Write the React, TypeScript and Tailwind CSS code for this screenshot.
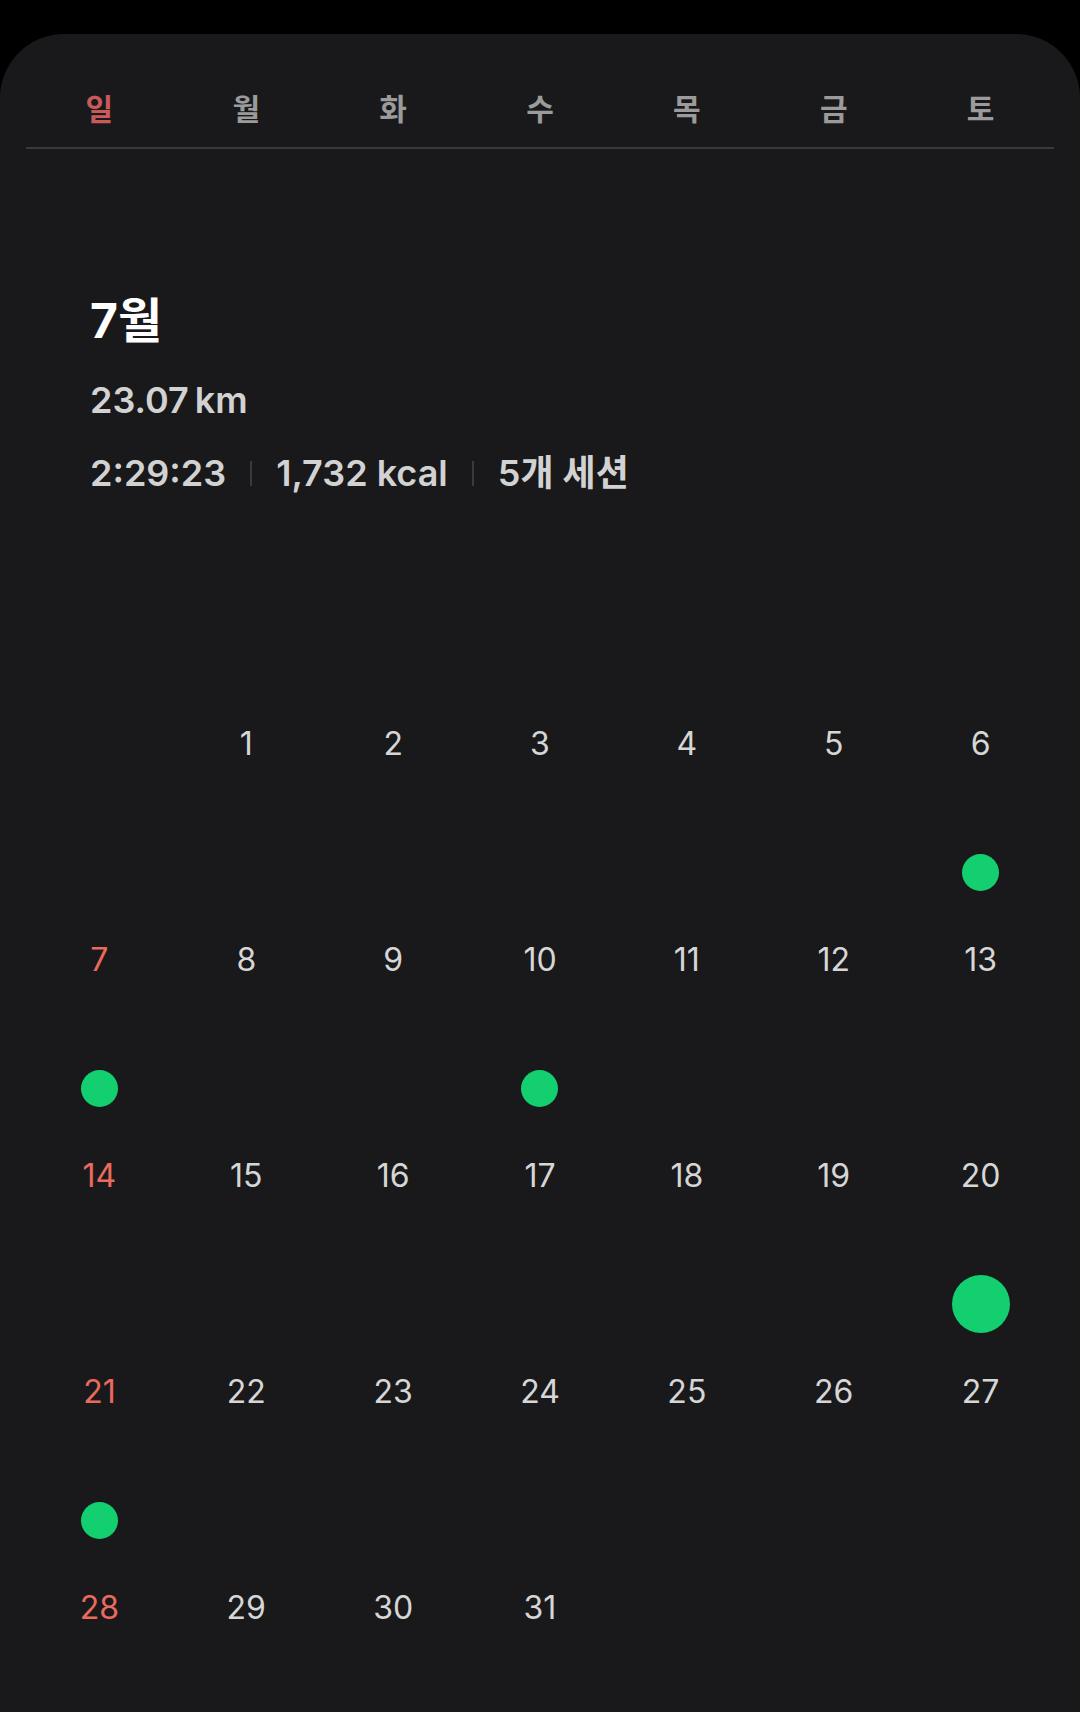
import React from 'react';

const FONT = { fontFamily: 'Inter, "Noto Sans CJK KR", sans-serif' };

const WEEKDAYS = ['일', '월', '화', '수', '목', '금', '토'];

// July 2024 starts on a Monday
const FIRST_OFFSET = 1;
const DAYS_IN_MONTH = 31;

// day -> dot size (session recorded)
const SESSIONS: Record<number, 'sm' | 'lg'> = {
  13: 'sm',
  14: 'sm',
  17: 'sm',
  27: 'lg',
  28: 'sm',
};

function DayCell({ day, col }: { day: number | null; col: number }) {
  const dot = day ? SESSIONS[day] : undefined;
  return (
    <div className="flex h-[216px] flex-col items-center">
      <div className="flex h-[58px] w-full items-center justify-center">
        {dot === 'sm' && <span className="h-[37px] w-[37px] rounded-full bg-[#13cf6f]" />}
        {dot === 'lg' && <span className="h-[58px] w-[58px] rounded-full bg-[#13cf6f]" />}
      </div>
      <div
        className={`mt-[39px] h-[40px] text-[32px] leading-[40px] font-normal ${
          col === 0 ? 'text-[#ea6a5e]' : 'text-[#d6d6d6]'
        }`}
      >
        {day ?? ''}
      </div>
    </div>
  );
}

export default function App() {
  const cells: (number | null)[] = [];
  for (let i = 0; i < FIRST_OFFSET; i++) cells.push(null);
  for (let d = 1; d <= DAYS_IN_MONTH; d++) cells.push(d);
  while (cells.length % 7 !== 0) cells.push(null);

  return (
    <div className="min-h-[1712px] w-[1080px] bg-black pt-[34px]" style={FONT}>
      <div className="h-[1678px] overflow-hidden rounded-t-[64px] bg-[#19191b]">
        {/* Weekday header */}
        <div className="px-[26px] pt-[47px]">
          <div className="grid grid-cols-7 border-b-2 border-[#3a3a3c] pb-[10px]">
            {WEEKDAYS.map((w, i) => (
              <div
                key={w}
                className={`flex h-[56px] items-center justify-center text-[30px] font-semibold ${
                  i === 0 ? 'text-[#c85a5a]' : 'text-[#9b9b9b]'
                }`}
              >
                {w}
              </div>
            ))}
          </div>
        </div>

        {/* Month summary */}
        <div className="px-[90px] pt-[148px]">
          <div className="text-[48px] leading-none font-bold text-white">7월</div>
          <div className="mt-[37px] flex items-baseline gap-[6px] text-[36px] leading-none font-semibold text-[#d2d2d2]">
            <span>23.07</span>
            <span>km</span>
          </div>
          <div className="mt-[37px] flex items-center text-[36px] leading-none font-semibold text-[#d2d2d2]">
            <span>2:29:23</span>
            <span className="mx-[24px] h-[25px] w-[2px] bg-[#3a3a3c]" />
            <span>1,732 kcal</span>
            <span className="mx-[24px] h-[25px] w-[2px] bg-[#3a3a3c]" />
            <span>5개 세션</span>
          </div>
        </div>

        {/* Calendar */}
        <div className="mt-[136px] grid grid-cols-7 px-[26px]">
          {cells.map((d, i) => (
            <DayCell key={i} day={d} col={i % 7} />
          ))}
        </div>
      </div>
    </div>
  );
}
